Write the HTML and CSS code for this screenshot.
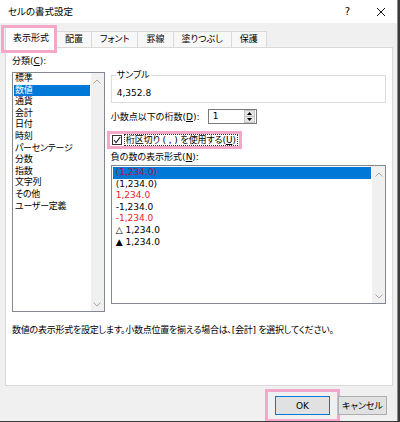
FILE: index.html
```html
<!DOCTYPE html>
<html lang="ja">
<head>
<meta charset="utf-8">
<title>セルの書式設定</title>
<link rel="stylesheet" href="styles.css">
</head>
<body>
<div class="window">
  <div class="titlebar">
    <span class="title">セルの書式設定</span>
    <span class="help">?</span>
    <span class="close"><svg width="10" height="10" viewBox="0 0 10 10"><path d="M1 1 L9 9 M9 1 L1 9" stroke="#111" stroke-width="1" fill="none"/></svg></span>
  </div>
  <div class="tabs">
    <div class="tab active">表示形式</div>
    <div class="tab">配置</div>
    <div class="tab">フォント</div>
    <div class="tab">罫線</div>
    <div class="tab">塗りつぶし</div>
    <div class="tab">保護</div>
  </div>
  <div class="panel">
    <div class="cols">
      <div class="leftcol">
        <div class="label">分類(<u>C</u>):</div>
        <div class="listbox catlist">
          <ul class="items">
            <li>標準</li>
            <li class="sel">数値</li>
            <li>通貨</li>
            <li>会計</li>
            <li>日付</li>
            <li>時刻</li>
            <li>パーセンテージ</li>
            <li>分数</li>
            <li>指数</li>
            <li>文字列</li>
            <li>その他</li>
            <li>ユーザー定義</li>
          </ul>
          <div class="scrollbar">
            <svg width="8" height="5" viewBox="0 0 8 5"><path d="M0.5 4.5 L4 1 L7.5 4.5" stroke="#a6a6a6" fill="none"/></svg>
            <svg width="8" height="5" viewBox="0 0 8 5"><path d="M0.5 0.5 L4 4 L7.5 0.5" stroke="#a6a6a6" fill="none"/></svg>
          </div>
        </div>
      </div>
      <div class="rightcol">
        <fieldset class="sample">
          <legend>サンプル</legend>
          <div class="sampleval">4,352.8</div>
        </fieldset>
        <div class="decrow">
          <span class="declabel">小数点以下の桁数(<u>D</u>):</span>
          <div class="spin">
            <span class="spinval">1</span>
            <div class="spinbtns">
              <span class="spinbtn"><svg width="5" height="3" viewBox="0 0 5 3"><path d="M0 3 L2.5 0 L5 3Z" fill="#000"/></svg></span>
              <span class="spinbtn"><svg width="5" height="3" viewBox="0 0 5 3"><path d="M0 0 L2.5 3 L5 0Z" fill="#000"/></svg></span>
            </div>
          </div>
        </div>
        <div class="checkrow">
          <span class="checkbox"><svg width="8" height="8" viewBox="0 0 8 8"><path d="M1 4 L3 6.5 L7.2 1.2" stroke="#222" stroke-width="1.1" fill="none"/></svg></span>
          <span class="checklabel">桁区切り ( , ) を使用する(<u>U</u>)</span>
        </div>
        <div class="label neglabel">負の数の表示形式(<u>N</u>):</div>
        <div class="listbox neglist">
          <ul class="items">
            <li class="sel red">(1,234.0)</li>
            <li>(1,234.0)</li>
            <li class="red">1,234.0</li>
            <li>-1,234.0</li>
            <li class="red">-1,234.0</li>
            <li>△ 1,234.0</li>
            <li>▲ 1,234.0</li>
          </ul>
          <div class="scrollbar">
            <svg width="8" height="5" viewBox="0 0 8 5"><path d="M0.5 4.5 L4 1 L7.5 4.5" stroke="#a6a6a6" fill="none"/></svg>
            <svg width="8" height="5" viewBox="0 0 8 5"><path d="M0.5 0.5 L4 4 L7.5 0.5" stroke="#a6a6a6" fill="none"/></svg>
          </div>
        </div>
      </div>
    </div>
    <p class="desc">数値の表示形式を設定します。小数点位置を揃える場合は、[会計] を選択してください。</p>
  </div>
  <div class="buttons">
    <span class="okwrap"><button class="btn ok">OK</button></span>
    <button class="btn cancel">キャンセル</button>
  </div>
</div>
</body>
</html>
```
FILE: styles.css
```css
html, body {
  margin: 0;
  padding: 0;
}
body {
  width: 400px;
  height: 422px;
  background: #3a3a3a;
  font-family: "DejaVu Sans", "Noto Sans CJK JP", sans-serif;
  font-size: 9px;
  font-feature-settings: "palt";
  color: #000;
  overflow: hidden;
}
.window {
  width: 397px;
  height: 421px;
  background: #f0f0f0;
  border-right: 1px solid #8a8a8a;
  display: flex;
  flex-direction: column;
  overflow: hidden;
}
.titlebar {
  height: 23px;
  background: #fff;
  display: flex;
  align-items: center;
  flex-shrink: 0;
}
.title {
  flex: 1;
  padding-left: 8px;
  font-size: 9.5px;
  line-height: 14px;
}
.help {
  width: 33px;
  text-align: center;
  font-size: 10px;
  line-height: 14px;
}
.close {
  width: 33px;
  display: flex;
  justify-content: center;
  align-items: center;
}
.tabs {
  height: 24px;
  display: flex;
  align-items: flex-end;
  padding-left: 5px;
  flex-shrink: 0;
}
.tab {
  height: 16px;
  box-sizing: border-box;
  padding: 0 8px;
  border: 1px solid #d9d9d9;
  border-bottom: none;
  border-left: none;
  background: #f7f7f7;
  line-height: 15px;
  white-space: nowrap;
}
.tab.active {
  position: relative;
  z-index: 1;
  height: 21px;
  margin-bottom: -1px;
  width: 52px;
  padding: 0;
  text-align: center;
  background: #fff;
  border-left: 1px solid #d9d9d9;
  line-height: 20px;
}
.tab.active::after {
  content: "";
  position: absolute;
  left: -5px;
  right: -1px;
  top: -3px;
  bottom: -5px;
  border: 3px solid #f4a7c9;
}
.panel {
  margin-left: 5px;
  width: 388px;
  height: 339px;
  box-sizing: border-box;
  background: #fff;
  border: 1px solid #d9d9d9;
  padding: 6px 6px 0 6px;
  flex-shrink: 0;
}
.cols {
  display: flex;
  gap: 6px;
}
.leftcol {
  width: 93px;
  display: flex;
  flex-direction: column;
}
.label {
  line-height: 14px;
  white-space: nowrap;
}
.listbox {
  border: 1px solid #828790;
  background: #fff;
  display: flex;
  box-sizing: border-box;
}
.catlist {
  margin-top: 4px;
  height: 240px;
}
.items {
  list-style: none;
  margin: 0;
  padding: 0 1px;
  flex: 1;
}
.items li {
  line-height: 11.6px;
  height: 11.6px;
  padding-left: 1px;
  white-space: nowrap;
}
.catlist .items li {
  letter-spacing: -0.3px;
}
.items li.sel {
  background: #0078d7;
  color: #fff;
}
.scrollbar {
  width: 13px;
  background: #f0f0f0;
  display: flex;
  flex-direction: column;
  justify-content: space-between;
  align-items: center;
  padding: 6px 0 4px;
  box-sizing: border-box;
}
.rightcol {
  width: 276px;
  display: flex;
  flex-direction: column;
}
.sample {
  margin: 15px 0 0 0;
  padding: 0 5px 3px 5px;
  border: 1px solid #dcdcdc;
  height: 34px;
  box-sizing: border-box;
}
.sample legend {
  padding: 0 1px;
  margin-left: -1px;
  line-height: 12px;
}
.sampleval {
  padding-top: 6px;
  line-height: 12px;
}
.decrow {
  margin-top: 6px;
  display: flex;
  align-items: center;
  height: 15px;
}
.declabel {
  width: 97px;
  line-height: 12px;
  white-space: nowrap;
}
.spin {
  width: 49px;
  height: 15px;
  box-sizing: border-box;
  border: 1px solid #7a7a7a;
  display: flex;
  background: #fff;
}
.spinval {
  flex: 1;
  padding-left: 4px;
  line-height: 13px;
}
.spinbtns {
  width: 11px;
  display: flex;
  flex-direction: column;
  margin: 0 1px 0 0;
}
.spinbtn {
  flex: 1;
  background: #e5e5e5;
  border: 1px solid #c4c4c4;
  display: flex;
  align-items: center;
  justify-content: center;
}
.spinbtn + .spinbtn {
  border-top: none;
}
.checkrow {
  margin-top: 10px;
  margin-left: -1px;
  align-self: flex-start;
  display: flex;
  align-items: center;
  height: 12px;
  padding: 0 1px 0 2px;
  gap: 2px;
  outline: 3px solid #f4a7c9;
}
.checkbox {
  width: 10px;
  height: 10px;
  box-sizing: border-box;
  border: 1px solid #333;
  background: #fff;
  display: flex;
  align-items: center;
  justify-content: center;
}
.checklabel {
  border: 1px dotted #333;
  line-height: 10px;
  padding: 0 1px;
  white-space: nowrap;
  letter-spacing: -0.1px;
}
.neglabel {
  margin-top: 5px;
  line-height: 12px;
}
.neglist {
  margin-top: 2px;
  height: 139px;
}
.neglist .items {
  padding-top: 1px;
}
.neglist .items li {
  padding-left: 3px;
}
.red {
  color: #e8202a;
}
.items li.sel.red {
  color: #b5123f;
}
.desc {
  margin: 12px 0 0 0;
  line-height: 12px;
  white-space: nowrap;
  letter-spacing: -0.25px;
}
.buttons {
  display: flex;
  justify-content: flex-end;
  align-items: center;
  padding: 10px 10px 0 0;
  gap: 8px;
}
.okwrap {
  display: flex;
  padding: 4px 7px;
  border: 3px solid #f4a7c9;
  margin: -7px -10px;
}
.btn {
  height: 19px;
  box-sizing: border-box;
  background: #e1e1e1;
  border: 1px solid #adadad;
  font-family: "DejaVu Sans", "Noto Sans CJK JP", sans-serif;
  font-size: 9px;
  font-feature-settings: "palt";
  padding: 0;
  color: #000;
  line-height: 16px;
}
.ok {
  width: 55px;
  border-color: #0078d7;
}
.cancel {
  width: 49px;
}
```
